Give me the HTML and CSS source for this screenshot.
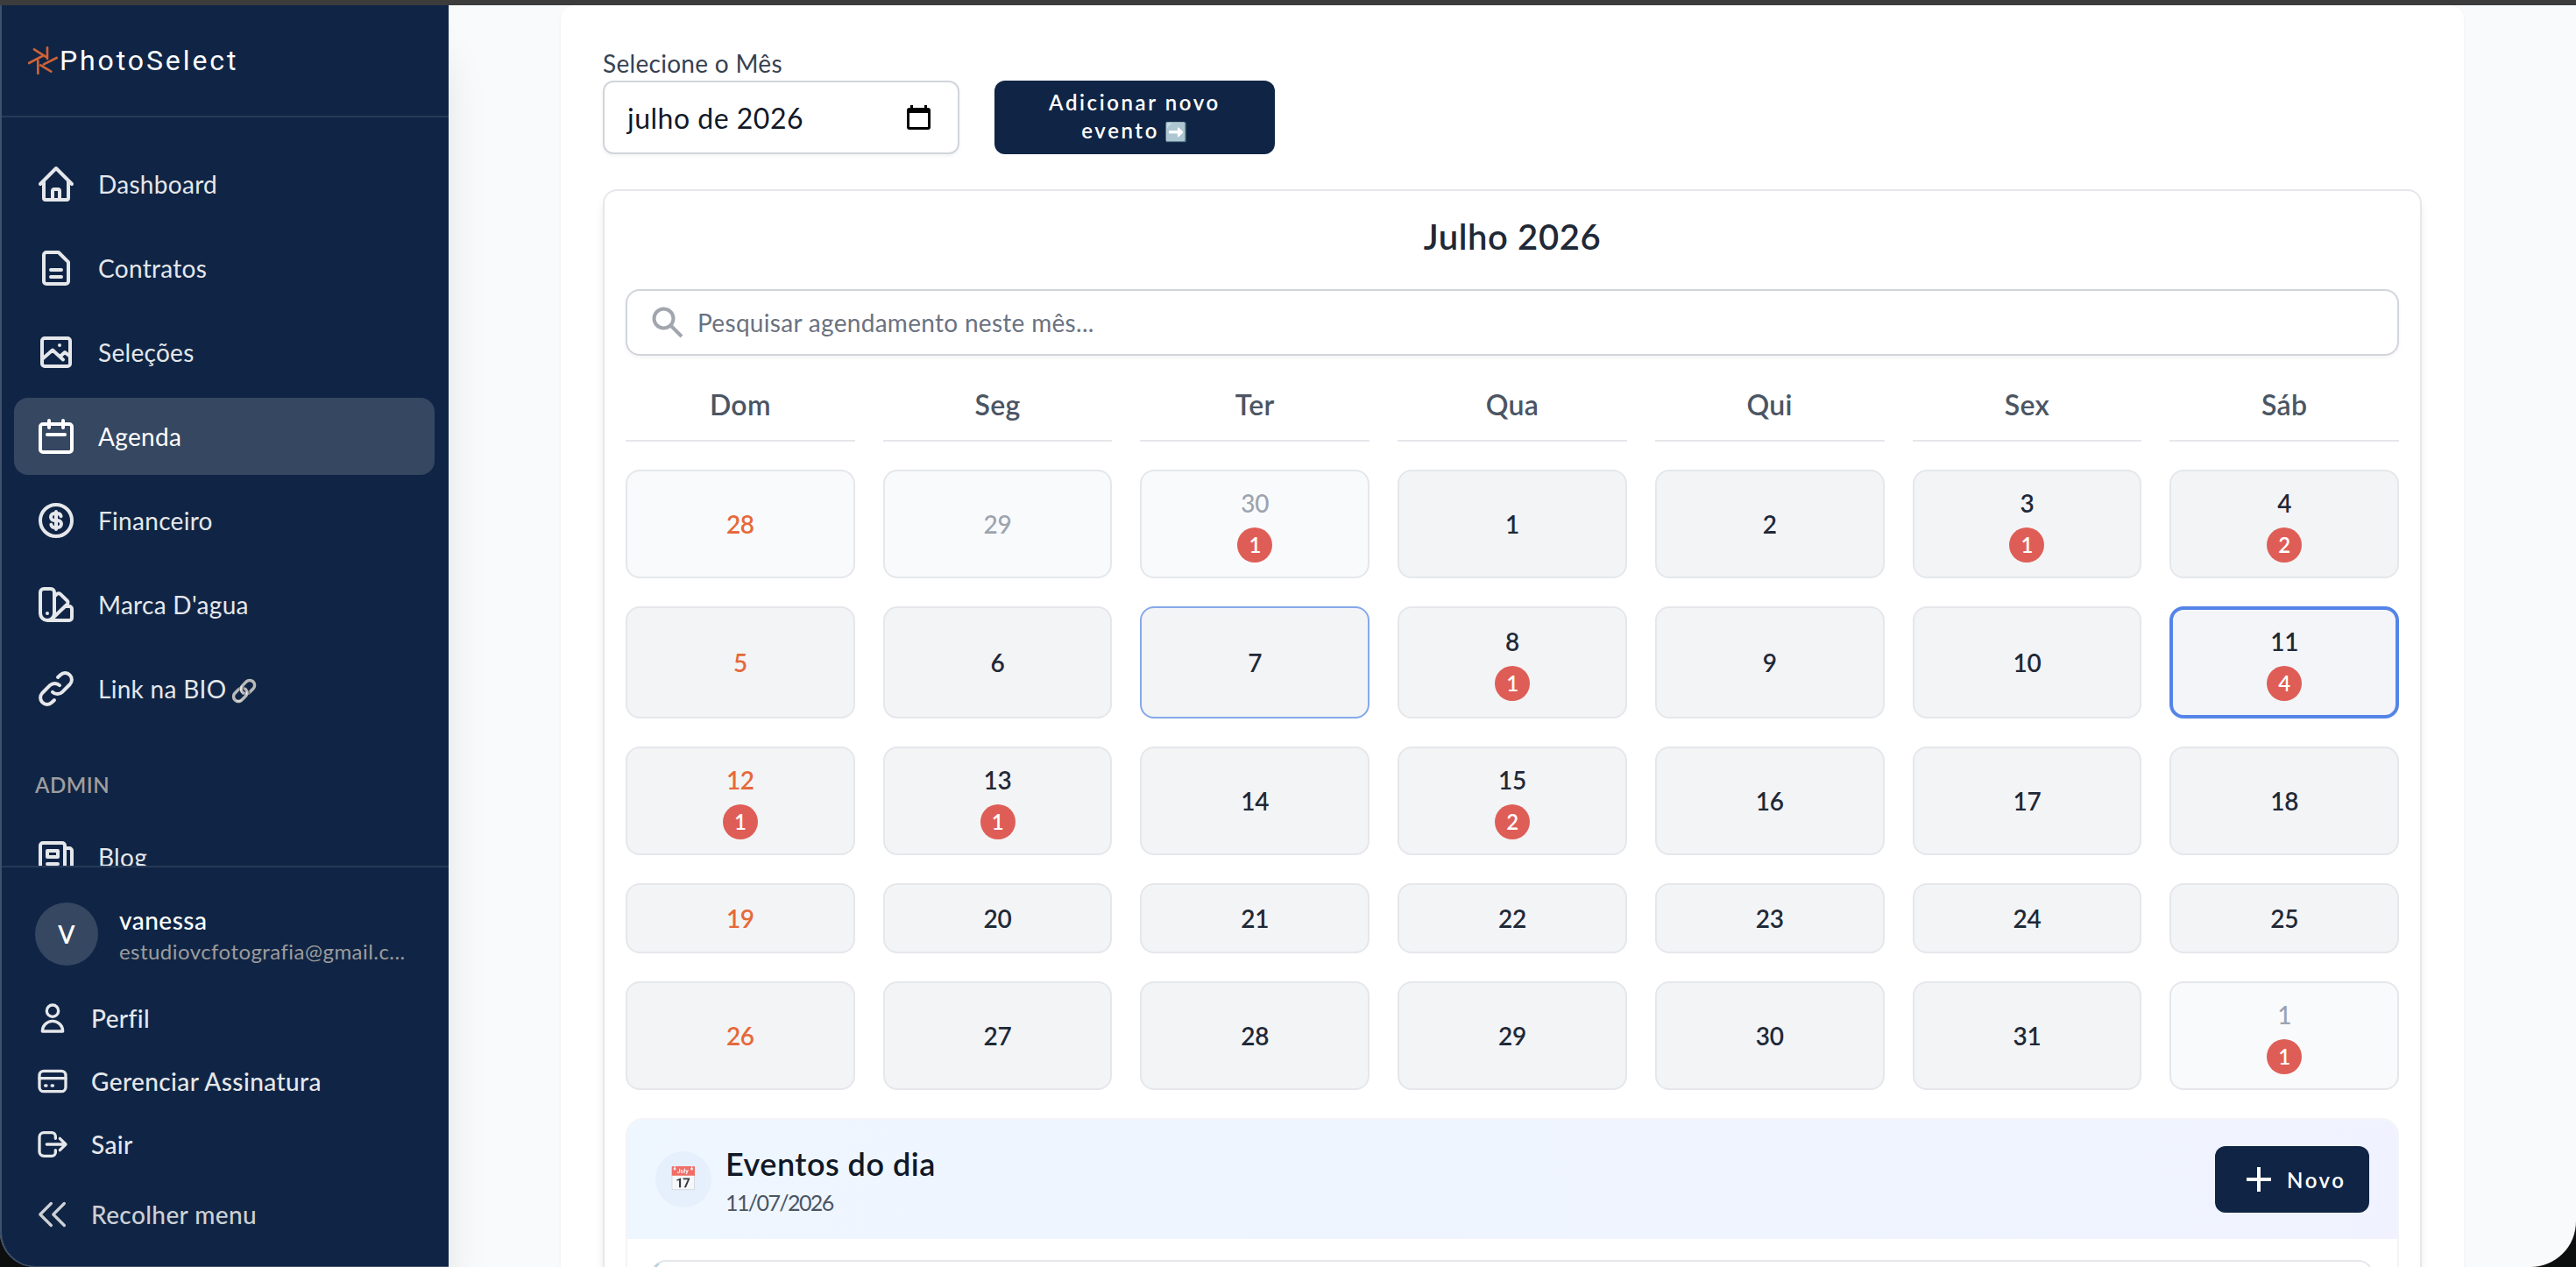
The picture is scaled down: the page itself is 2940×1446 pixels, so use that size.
FILE: index.html
```html
<!DOCTYPE html>
<html lang="pt-BR">
<head>
  <meta charset="UTF-8" />
  <meta name="viewport" content="width=device-width, initial-scale=1" />
  <title>Agenda - PhotoSelect</title>
  <link rel="stylesheet" href="styles.css">
</head>
<body>
  <div class="top-strip"></div>

  <div class="window">
    <!-- Menu lateral -->
    <aside class="sidebar">
      <div class="brand">
        <svg class="brand-icon" viewBox="36 39 102 96"><path d="M102 43v38M134 78L90 100M115 125L79 103M70 132V88M39 96l46-24M57 49l39 25"/></svg>
        <span>PhotoSelect</span>
      </div>

      <nav class="menu">
        <a href="#" class="menu-item">
          <svg viewBox="0 0 24 24"><path d="M3 12l9-9 9 9M5 10.500V20a1 1 0 0 0 1 1h12a1 1 0 0 0 1-1v-9.500M10 21v-5a1 1 0 0 1 1-1h2a1 1 0 0 1 1 1v5"/></svg>
          Dashboard
        </a>
        <a href="#" class="menu-item">
          <svg viewBox="0 0 24 24"><path d="M5 4.500A1.500 1.500 0 0 1 6.500 3h6.900L19 8.600v10.900a1.500 1.500 0 0 1-1.500 1.500h-11A1.500 1.500 0 0 1 5 19.500zM9 13h6M9 17h6"/></svg>
          Contratos
        </a>
        <a href="#" class="menu-item">
          <svg viewBox="0 0 24 24"><rect x="4" y="4" width="16" height="16" rx="1.500"/><path d="M4 16l6-5.200 6 5.400M14.500 14.200l2.500-2.200 3 2.400M14 8v.010"/></svg>
          Seleções
        </a>
        <a href="#" class="menu-item active">
          <svg viewBox="0 0 24 24"><rect x="3" y="5" width="18" height="16" rx="1.500"/><path d="M8 3v4M16 3v4M7 11h10"/></svg>
          Agenda
        </a>
        <a href="#" class="menu-item">
          <svg viewBox="0 0 24 24"><circle cx="12" cy="12" r="9"/><path d="M14.800 9.600C14.600 8.600 13.800 8 12.800 8H11a2 2 0 0 0 0 4h2a2 2 0 0 1 0 4h-1.800c-1 0-1.800-.6-2-1.600M12 7v10"/></svg>
          Financeiro
        </a>
        <a href="#" class="menu-item">
          <svg viewBox="0 0 24 24"><path d="M5 3h4a2 2 0 0 1 2 2v12a4 4 0 0 1-8 0V5a2 2 0 0 1 2-2M11 7.350l1.400-1.300a1.500 1.500 0 0 1 2.100 0l3.800 3.700a1.500 1.500 0 0 1 0 2.100L9.660 20.100M17 13h2.500a1.500 1.500 0 0 1 1.500 1.500v5a1.500 1.500 0 0 1-1.500 1.500H7M7 17v.010"/></svg>
          Marca D'agua
        </a>
        <a href="#" class="menu-item">
          <svg viewBox="0 0 24 24"><path d="M13 5.500l1.500-1.400a3.820 3.820 0 0 1 5.400 5.400l-4.400 4.400a3.900 3.900 0 0 1-5.500 0M11 18.500l-1.500 1.400a3.820 3.820 0 0 1-5.400-5.400l4.400-4.400a3.900 3.900 0 0 1 5.500 0"/></svg>
          <span>Link na BIO <span class="emoji emoji-link">🔗</span></span>
        </a>

        <h3 class="menu-title">ADMIN</h3>
        <a href="#" class="menu-item">
          <svg viewBox="0 0 24 24"><path d="M17 20V5.500A1.500 1.500 0 0 0 15.500 4h-11A1.500 1.500 0 0 0 3 5.500V19a2 2 0 0 0 2 2h14M17 7h2.500A1.500 1.500 0 0 1 21 8.500V19a2 2 0 0 1-4 0M7 8.500h6v3.500H7zM7 16h6"/></svg>
          Blog
        </a>
      </nav>

      <div class="sidebar-footer">
        <div class="user">
          <div class="avatar">V</div>
          <div class="user-info">
            <strong>vanessa</strong>
            <span>estudiovcfotografia@gmail.c...</span>
          </div>
        </div>
        <a href="#" class="footer-item">
          <svg viewBox="0 0 24 24"><circle cx="12" cy="7" r="4"/><path d="M5 21a7 7 0 0 1 14 0z"/></svg>
          Perfil
        </a>
        <a href="#" class="footer-item">
          <svg viewBox="0 0 24 24"><rect x="3" y="5" width="18" height="14" rx="3"/><path d="M3 10h18M7 15h.800M11.500 15h.800"/></svg>
          Gerenciar Assinatura
        </a>
        <a href="#" class="footer-item">
          <svg viewBox="0 0 24 24"><path d="M14 8V6.500A2.500 2.500 0 0 0 11.500 4H6a3 3 0 0 0-3 3v10a3 3 0 0 0 3 3h5.500a2.500 2.500 0 0 0 2.500-2.500V16M8 12h13M17 8l4 4-4 4"/></svg>
          Sair
        </a>
        <a href="#" class="footer-item collapse">
          <svg viewBox="0 0 24 24"><path d="M11 4.500L3.500 12l7.500 7.500M20 4.500L12.500 12l7.500 7.500"/></svg>
          Recolher menu
        </a>
      </div>
    </aside>

    <!-- Conteúdo -->
    <main class="content">
      <div class="page-card">
        <div class="toolbar">
          <div class="field">
            <label>Selecione o Mês</label>
            <div class="month-input">
              <span>julho de 2026</span>
              <svg viewBox="0 0 27 28"><path d="M4 0h3v3h13V0h3v3h1a3 3 0 0 1 3 3v19a3 3 0 0 1-3 3H3a3 3 0 0 1-3-3V6a3 3 0 0 1 3-3h1zM3 9v16h21V9z"/></svg>
            </div>
          </div>
          <button class="btn btn-add">Adicionar novo<br>evento <span class="emoji emoji-arrow">➡️</span></button>
        </div>

        <section class="calendar">
          <h2>Julho 2026</h2>
          <div class="search">
            <svg viewBox="0 0 36 36"><circle cx="13.500" cy="13.500" r="11"/><path d="M21.500 21.500L34 34"/></svg>
            <span>Pesquisar agendamento neste mês...</span>
          </div>
          <div class="weekdays">
            <div>Dom</div><div>Seg</div><div>Ter</div><div>Qua</div><div>Qui</div><div>Sex</div><div>Sáb</div>
          </div>
          <div class="days" id="days"></div>

          <div class="events">
            <div class="events-header">
              <div class="events-icon"><span class="emoji">📅</span></div>
              <div class="events-title">
                <h3>Eventos do dia</h3>
                <p>11/07/2026</p>
              </div>
              <button class="btn btn-new">
                <svg viewBox="0 0 30 30"><path d="M15 1v28M1 15h28"/></svg>
                Novo
              </button>
            </div>
            <div class="event-item"></div>
          </div>
        </section>
      </div>
    </main>
  </div>

  <script>
    // quantidade de eventos por célula (28/06 a 01/08)
    const eventos = { 2: 1, 5: 1, 6: 2, 10: 1, 13: 4, 14: 1, 15: 1, 17: 2, 34: 1 };
    const days = document.getElementById('days');

    for (let i = 0; i < 35; i++) {
      const dia = i < 3 ? 28 + i : (i === 34 ? 1 : i - 2);
      const cell = document.createElement('div');
      cell.className = 'day';
      if (i < 3 || i === 34) cell.classList.add('other');
      if (i % 7 === 0) cell.classList.add('sunday');
      if (i === 9) cell.classList.add('today');
      if (i === 13) cell.classList.add('selected');
      cell.innerHTML = `<span>${dia}</span>` + (eventos[i] ? `<span class="badge">${eventos[i]}</span>` : '');
      days.appendChild(cell);
    }
  </script>
</body>
</html>
```
FILE: styles.css
```css
* { box-sizing: border-box; }
body {
  font-family: Lato, "Liberation Sans", sans-serif;
  font-size: 28px;
  letter-spacing: 0.3px;
  background: #0d0f0f;
  color: #1f2937;
  margin: 0;
  height: 1446px;
  overflow: hidden;
  display: flex;
  flex-direction: column;
}
h2, h3, p { margin: 0; }
a { text-decoration: none; }
svg {
  fill: none;
  stroke: currentColor;
  stroke-width: 2;
  stroke-linecap: round;
  stroke-linejoin: round;
  flex-shrink: 0;
}
.top-strip {
  height: 6px;
  background: #3c3c3c;
  flex-shrink: 0;
}
.window {
  flex: 1;
  min-height: 0;
  display: flex;
  overflow: hidden;
  border-radius: 0 0 52px 40px;
  background: #f9fafb;
}

/* Menu lateral */
.sidebar {
  position: relative;
  z-index: 1;
  width: 512px;
  flex-shrink: 0;
  background: #102545;
  color: #e5e7eb;
  display: flex;
  flex-direction: column;
  box-shadow: 0 50px 50px -12px rgba(0, 0, 0, 0.15);
}
/* contorno claro da janela */
.sidebar::after {
  content: "";
  position: absolute;
  inset: 0;
  border-left: 2px solid #3e506b;
  border-bottom: 1px solid #3e506b;
  border-bottom-left-radius: 40px;
  pointer-events: none;
}
.brand {
  height: 128px;
  padding: 0 32px;
  display: flex;
  align-items: center;
  border-bottom: 2px solid #273958;
  font-family: Roboto, sans-serif;
  font-size: 32px;
  letter-spacing: 2.9px;
  color: #fff;
  flex-shrink: 0;
}
.brand-icon {
  width: 34px;
  height: 32px;
  margin-right: 2px;
  stroke: #cf6236;
  stroke-width: 8;
}
.menu {
  flex: 1;
  min-height: 0;
  overflow: hidden;
  padding: 32px 16px 0;
}
.menu-item {
  height: 88px;
  margin-bottom: 8px;
  padding: 0 24px;
  display: flex;
  align-items: center;
  gap: 24px;
  border-radius: 16px;
  color: #e5e7eb;
}
.menu-item svg {
  width: 48px;
  height: 48px;
}
.menu-item.active {
  background: #364762;
  color: #fff;
}
.menu-title {
  margin: 50px 0 22px 24px;
  font-size: 24px;
  font-weight: 600;
  line-height: 32px;
  letter-spacing: 0.5px;
  color: #9e9e9e;
}
.emoji {
  letter-spacing: 0;
  font-family: "Noto Color Emoji", sans-serif;
}
.emoji-link {
  font-size: 25px;
  margin-left: -3px;
  filter: grayscale(1) brightness(1.1);
}
.emoji-arrow {
  font-size: 21px;
  margin-left: -2px;
  filter: saturate(0.6) brightness(1.15);
}
.sidebar-footer {
  height: 458px;
  flex-shrink: 0;
  padding: 40px 16px 0;
  border-top: 2px solid #273958;
}
.user {
  display: flex;
  align-items: center;
  gap: 24px;
  padding: 0 24px;
  margin-bottom: 24px;
}
.avatar {
  width: 72px;
  height: 72px;
  border-radius: 50%;
  background: #364762;
  color: #fff;
  font-weight: 600;
  display: flex;
  align-items: center;
  justify-content: center;
}
.user-info {
  display: flex;
  flex-direction: column;
}
.user-info strong {
  font-weight: 500;
  line-height: 40px;
  letter-spacing: 0.5px;
  color: #fff;
}
.user-info span {
  font-size: 24px;
  line-height: 32px;
  letter-spacing: 0.45px;
  color: #9e9c9c;
  white-space: nowrap;
}
.footer-item {
  height: 72px;
  padding: 0 24px;
  display: flex;
  align-items: center;
  gap: 24px;
  font-weight: 500;
  letter-spacing: 0.4px;
  color: #e5e7eb;
}
.footer-item svg {
  width: 40px;
  height: 40px;
}
.footer-item.collapse {
  margin-top: 8px;
  color: #ccd0d5;
}

/* Conteúdo */
.content {
  flex: 1;
  min-width: 0;
  padding: 0 128px;
}
.page-card {
  height: 1500px;
  padding: 46px 48px 0;
  background: #fff;
  border-radius: 16px 16px 0 0;
  box-shadow: 0 2px 4px rgba(0, 0, 0, 0.05);
}
.toolbar {
  display: flex;
  align-items: flex-end;
  gap: 40px;
  margin-bottom: 40px;
}
.field label {
  display: block;
  line-height: 40px;
  color: #374151;
}
.month-input {
  width: 407px;
  height: 84px;
  padding: 0 31px 0 26px;
  display: flex;
  align-items: center;
  justify-content: space-between;
  border: 2px solid #d1d5db;
  border-radius: 12px;
  font-size: 32px;
  letter-spacing: 0.5px;
  color: #111827;
  box-shadow: 0 2px 4px rgba(0, 0, 0, 0.05);
}
.month-input svg {
  width: 27px;
  height: 28px;
  fill: #000;
  stroke: none;
}
.btn {
  border: none;
  border-radius: 12px;
  background: #102545;
  color: #fff;
  font-family: inherit;
  font-size: 24px;
  font-weight: 600;
  letter-spacing: 2.6px;
}
.btn-add {
  width: 320px;
  height: 84px;
  padding: 0;
  line-height: 32px;
}
.calendar {
  height: 1400px;
  padding: 24px;
  border: 2px solid #e5e7eb;
  border-radius: 16px;
  box-shadow: 0 8px 12px -2px rgba(0, 0, 0, 0.1);
}
.calendar h2 {
  font-size: 40px;
  font-weight: 600;
  line-height: 56px;
  letter-spacing: 0.6px;
  text-align: center;
  margin-bottom: 32px;
}
.search {
  height: 76px;
  padding: 0 28px;
  display: flex;
  align-items: center;
  gap: 16px;
  border: 2px solid #d1d5db;
  border-radius: 16px;
  color: #6b7280;
  box-shadow: 0 2px 4px rgba(0, 0, 0, 0.05);
}
.search svg {
  width: 36px;
  height: 36px;
  stroke: #a1a5ad;
  stroke-width: 4;
  stroke-linecap: butt;
}
.weekdays, .days {
  display: grid;
  grid-template-columns: repeat(7, 1fr);
  gap: 32px;
  text-align: center;
}
.weekdays {
  margin: 32px 0;
}
.weekdays div {
  padding-bottom: 16px;
  border-bottom: 2px solid #e5e7eb;
  font-size: 32px;
  font-weight: 600;
  line-height: 48px;
  color: #4b5563;
}
.day {
  min-height: 80px;
  padding: 16px;
  display: flex;
  flex-direction: column;
  align-items: center;
  justify-content: center;
  gap: 8px;
  border: 2px solid #e5e7eb;
  border-radius: 16px;
  background: #f3f4f6;
  font-weight: 600;
  line-height: 40px;
  letter-spacing: -0.3px;
}
.day.other {
  background: #f9fafc;
  color: #9ca3af;
  font-weight: 500;
}
.day.sunday {
  color: #e5693a;
  font-weight: 600;
}
.day.today { border-color: #85a8ea; }
.day.selected {
  border: 4px solid #5484e8;
  background: #f3f5f9;
}
.badge {
  width: 40px;
  height: 40px;
  border-radius: 50%;
  background: #de5e57;
  color: #fff;
  font-size: 24px;
  font-weight: 600;
}

/* Eventos do dia */
.events {
  margin-top: 32px;
  height: 300px;
  border: 2px solid #f3f4f6;
  border-radius: 20px;
  overflow: hidden;
}
.events-header {
  height: 136px;
  padding: 0 32px;
  display: flex;
  align-items: center;
  background: linear-gradient(to right, #eef6ff, #f0f3ff);
}
.events-icon {
  width: 64px;
  height: 64px;
  margin-right: 16px;
  border-radius: 50%;
  background: #e6f0fd;
  display: flex;
  align-items: center;
  justify-content: center;
  font-size: 27px;
}
.events-icon .emoji { opacity: 0.75; }
.events-title { flex: 1; }
.events-title h3 {
  font-size: 36px;
  font-weight: 600;
  line-height: 52px;
  letter-spacing: 0.5px;
  color: #111827;
}
.events-title p {
  font-size: 25px;
  line-height: 36px;
  letter-spacing: -1.6px;
  color: #4b5563;
}
.btn-new {
  width: 176px;
  height: 76px;
  padding: 0 0 0 35px;
  display: flex;
  align-items: center;
  gap: 17px;
}
.btn-new svg {
  width: 30px;
  height: 30px;
  stroke-width: 4;
  stroke-linecap: butt;
}
.event-item {
  height: 160px;
  margin: 24px 28px;
  border: 2px solid #e5e7eb;
  border-left: 4px solid #b9d2de;
  border-radius: 16px;
}
```
